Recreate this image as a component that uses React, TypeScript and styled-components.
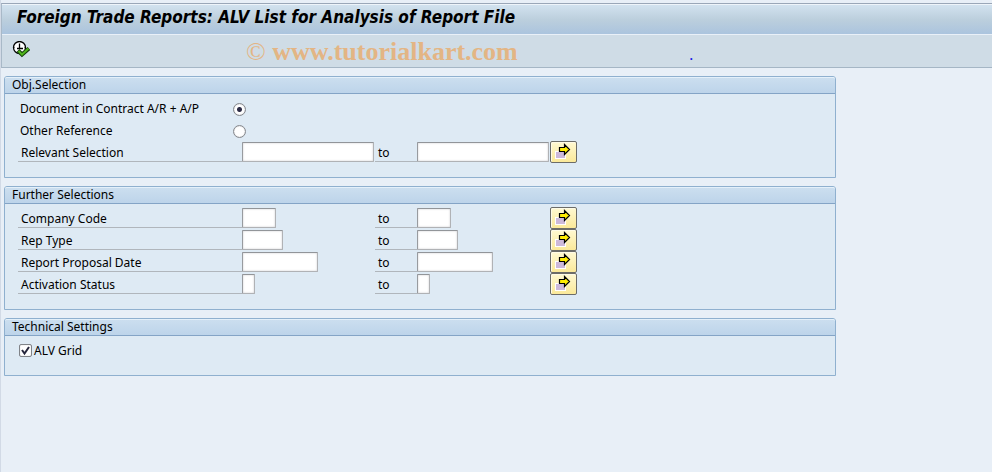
import React, { useId } from 'react';
import styled, { createGlobalStyle } from 'styled-components';

const GlobalStyle = createGlobalStyle`
  *, *::before, *::after { box-sizing: border-box; }
  html { min-height: 100%; background: #e8eff7; }
  body {
    margin: 0;
    font: 400 12px/24px "Noto Sans", "Open Sans", sans-serif;
    color: #000;
  }
  input, button { font: inherit; color: inherit; margin: 0; }
`;

const Page = styled.div`
  min-height: 100vh;
  padding-top: 3px;
  border-left: 1px solid #d2dae6;
  background: #e8eff7;
`;

const Header = styled.header`
  border-top: 1px solid #9aa7b8;
  border-left: 1px solid #a9b9c8;
  border-bottom: 1px solid #a5b6c5;
`;

const Title = styled.h1`
  height: 31px;
  margin: 0;
  padding-left: 15px;
  border-top: 1px solid #eef4fa;
  border-bottom: 1px solid #e9f0f8;
  background: linear-gradient(#d2e2ef 0%, #bccfdd 50%, #abc4de 100%);
  font: italic 700 17px/25px "DejaVu Sans Condensed", "DejaVu Sans", sans-serif;
  white-space: nowrap;
`;

const Toolbar = styled.div`
  display: flex;
  align-items: center;
  height: 32px;
  padding-left: 8px;
  background: #cfdce6;
`;

const ToolButton = styled.button`
  display: flex;
  align-items: flex-start;
  width: 24px;
  height: 24px;
  padding: 2px;
  border: 0;
  background: none;
`;

const Watermark = styled.span`
  margin-left: 212px;
  font: 700 26px/30px "Liberation Serif", serif;
  color: #e3b584;
  white-space: nowrap;
  padding-top: 2px;
`;

const Copyright = styled.span`
  font-weight: 400;
`;

const Dot = styled.span`
  margin-left: 172px;
  padding-top: 10px;
  font: 700 12px/16px "Liberation Serif", serif;
  color: #1414e6;
`;

const Main = styled.main`
  display: flex;
  flex-direction: column;
  gap: 8px;
  max-width: 835px;
  padding: 8px 0 8px 3px;
`;

const Group = styled.section`
  border: 1px solid #8fb0cf;
  border-radius: 3px 3px 0 0;
  background: #deeaf4;
`;

const GroupTitle = styled.h2`
  height: 17px;
  margin: 0;
  padding-left: 7px;
  border-top: 1px solid #e4f0fa;
  border-bottom: 1px solid #84a4c6;
  border-radius: 2px 2px 0 0;
  background: linear-gradient(#cbdeef, #bdd4ea);
  font-size: 12px;
  font-weight: 400;
  line-height: 13px;
`;

const GroupBody = styled.div`
  padding: 3px 13px 14px;
`;

const Row = styled.div`
  display: grid;
  grid-template-columns: 224px 133px 42px 133px 27px;
  height: 22px;
`;

const OptionRow = styled.div`
  display: grid;
  grid-template-columns: 213px 13px;
  height: 22px;
  padding-left: 2px;
`;

const CheckRow = styled.div`
  display: flex;
  gap: 2px;
  height: 22px;
  padding-left: 1px;
`;

const FieldLabel = styled.label`
  height: 21px;
  padding-left: 3px;
  border-bottom: 1px solid #b0b6bc;
  white-space: nowrap;
`;

const TextField = styled.input<{ $width: number }>`
  width: ${p => p.$width}px;
  height: 20px;
  margin-top: 1px;
  padding: 0 3px;
  border: 1px solid #b0b2b5;
  border-top-color: #929599;
  border-left-color: #989b9f;
  border-radius: 1px;
  background: #fff;
  box-shadow: inset 0 0 2px #c4c4c8;
  outline: 0;
`;

const Radio = styled.input.attrs({ type: 'radio' })`
  appearance: none;
  align-self: center;
  width: 13px;
  height: 13px;
  border: 1px solid #85888d;
  border-radius: 50%;
  background: #fff;
  box-shadow: inset 0 0 1px #a0a0a4;

  &:checked {
    background: radial-gradient(circle, #2b2b45 0 2px, #fff 3px);
  }
`;

const CheckFrame = styled.span`
  display: grid;
  width: 13px;
  height: 13px;
  margin-top: 5px;

  > * { grid-area: 1 / 1; }
  svg { pointer-events: none; }
  input:not(:checked) + svg { visibility: hidden; }
`;

const Checkbox = styled.input.attrs({ type: 'checkbox' })`
  appearance: none;
  width: 13px;
  height: 13px;
  border: 1px solid #808388;
  border-radius: 2px;
  background: #fff;
  box-shadow: inset 0 0 1px #a0a0a4;
`;

const MoreButton = styled.button`
  width: 27px;
  height: 22px;
  padding: 0;
  border: 1px solid #6c6c68;
  border-radius: 2px;
  background: linear-gradient(#fff9d2, #fbe999);
  box-shadow: inset 1px 1px 0 #fffbe6;

  svg { display: block; }
`;

function ExecuteIcon() {
  return (
    <svg width="18" height="18" viewBox="0 0 18 18" fill="none" aria-hidden="true">
      <circle cx="7.5" cy="6.5" r="6" fill="#fff" stroke="#000" strokeWidth="1.3" />
      <path d="M7.5 2.500v5M5 7.500h6" stroke="#000" strokeWidth="1.300" />
      <path d="M2 6.500h1M12 6.500h1M7.5 10.500v1" stroke="#777" />
      <path d="M6 9.500l4 4L17 7.500" stroke="#123c0a" strokeWidth="4" />
      <path d="M6.500 10l3.500 3.500L16.500 7.500" stroke="#4fb41c" strokeWidth="2" />
    </svg>
  );
}

function MoreIcon() {
  return (
    <svg width="25" height="20" viewBox="0 0 25 20" aria-hidden="true">
      <path d="M4 9h11v8H4z" fill="#fff" />
      <path d="M5 10h9v6H5z" fill="#cdb9da" />
      <path
        d="M8.500 5.500h5v-3l5 5-5 5v-3h-5z"
        fill="#ffec00"
        stroke="#000"
        strokeWidth="1.200"
      />
    </svg>
  );
}

function RangeRow({ label, width }: { label: string; width: number }) {
  const id = useId();
  return (
    <Row>
      <FieldLabel htmlFor={`${id}-from`}>{label}</FieldLabel>
      <TextField id={`${id}-from`} $width={width} />
      <FieldLabel htmlFor={`${id}-to`}>to</FieldLabel>
      <TextField id={`${id}-to`} $width={width} />
      <MoreButton type="button" aria-label={`Multiple selection: ${label}`}>
        <MoreIcon />
      </MoreButton>
    </Row>
  );
}

function Option({ label, checked }: { label: string; checked?: boolean }) {
  const id = useId();
  return (
    <OptionRow>
      <label htmlFor={id}>{label}</label>
      <Radio id={id} name="object" defaultChecked={checked} />
    </OptionRow>
  );
}

const furtherSelections = [
  { label: 'Company Code', width: 34 },
  { label: 'Rep Type', width: 41 },
  { label: 'Report Proposal Date', width: 76 },
  { label: 'Activation Status', width: 13 },
];

export default function App() {
  return (
    <Page>
      <GlobalStyle />
      <Header>
        <Title>Foreign Trade Reports: ALV List for Analysis of Report File</Title>
        <Toolbar>
          <ToolButton type="button" aria-label="Execute">
            <ExecuteIcon />
          </ToolButton>
          <Watermark>
            <Copyright>©</Copyright> www.tutorialkart.com
          </Watermark>
          <Dot>.</Dot>
        </Toolbar>
      </Header>
      <Main>
        <Group>
          <GroupTitle>Obj.Selection</GroupTitle>
          <GroupBody>
            <Option label="Document in Contract A/R + A/P" checked />
            <Option label="Other Reference" />
            <RangeRow label="Relevant Selection" width={132} />
          </GroupBody>
        </Group>
        <Group>
          <GroupTitle>Further Selections</GroupTitle>
          <GroupBody>
            {furtherSelections.map(row => (
              <RangeRow key={row.label} {...row} />
            ))}
          </GroupBody>
        </Group>
        <Group>
          <GroupTitle>Technical Settings</GroupTitle>
          <GroupBody>
            <CheckRow>
              <CheckFrame>
                <Checkbox id="alv-grid" defaultChecked />
                <svg width="13" height="13" viewBox="0 0 13 13" fill="none" aria-hidden="true">
                  <path d="M3 6l2.500 3.500L10 3" stroke="#26263c" strokeWidth="2" />
                </svg>
              </CheckFrame>
              <label htmlFor="alv-grid">ALV Grid</label>
            </CheckRow>
          </GroupBody>
        </Group>
      </Main>
    </Page>
  );
}
